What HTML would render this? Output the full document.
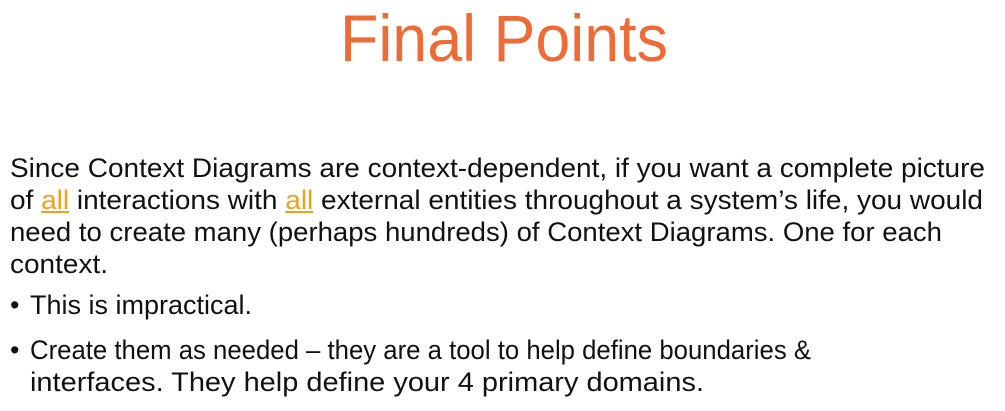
<!DOCTYPE html>
<html><head><meta charset="utf-8"><style>
body{margin:0;width:1005px;height:411px;background:#fff;overflow:hidden;position:relative;font-family:"Liberation Sans",sans-serif;color:#111}
.l{position:absolute;white-space:nowrap;font-size:27px;line-height:32px;transform-origin:0 0}
.t{position:absolute;white-space:nowrap;font-size:66px;line-height:76px;color:#EC6B37;transform-origin:0 0}
u{color:#F0A020;text-decoration-color:#F0A020}
</style></head><body>
<div class="t" data-w="328" style="left:340px;top:0px">Final Points</div>
<div class="l" data-w="975" style="left:10px;top:152px">Since Context Diagrams are context-dependent, if you want a complete picture</div>
<div class="l" data-w="973" style="left:10px;top:184px">of <u>all</u> interactions with <u>all</u> external entities throughout a system’s life, you would</div>
<div class="l" data-w="932" style="left:10px;top:216px">need to create many (perhaps hundreds) of Context Diagrams. One for each</div>
<div class="l" data-w="98" style="left:10px;top:248px">context.</div>
<div class="l" style="left:10px;top:289px">•</div>
<div class="l" data-w="222" style="left:30px;top:289px">This is impractical.</div>
<div class="l" style="left:10px;top:334px">•</div>
<div class="l" data-w="781" style="left:30px;top:334px">Create them as needed – they are a tool to help define boundaries &amp;</div>
<div class="l" data-w="674" style="left:30px;top:366px">interfaces. They help define your 4 primary domains.</div>
<script>
document.querySelectorAll('[data-w]').forEach(function(e){var w=e.getBoundingClientRect().width;e.style.transform='scaleX('+(e.dataset.w/w)+')';});
</script>
</body></html>
